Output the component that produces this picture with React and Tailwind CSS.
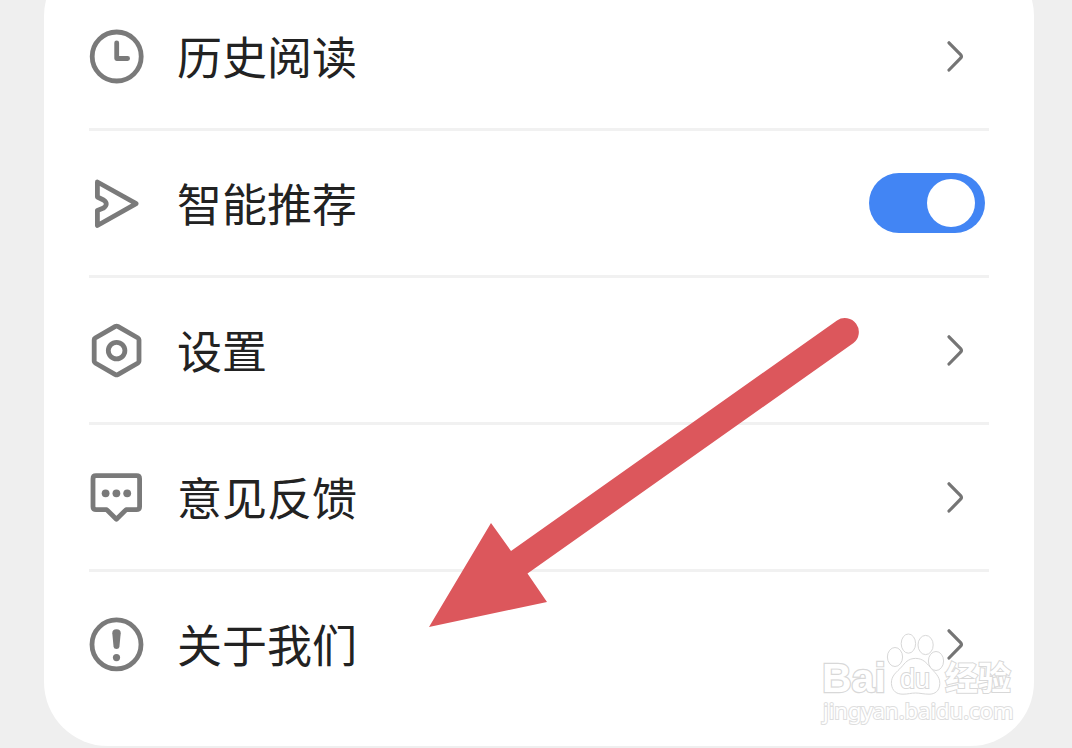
import React, { useState } from "react";

function HistoryIcon() {
  return (
    <svg className="w-14 h-14 shrink-0" viewBox="0 0 56 56" fill="none" stroke="#7a7a7a" strokeWidth="4.8" strokeLinecap="round" strokeLinejoin="round">
      <circle cx="27.7" cy="28.5" r="24.5" />
      <path d="M27.7 14.8V30.5H38.6" />
    </svg>
  );
}

function RecommendIcon() {
  return (
    <svg className="w-14 h-14 shrink-0" viewBox="0 0 56 56" fill="none" stroke="#7a7a7a" strokeWidth="4.8" strokeLinecap="round" strokeLinejoin="round">
      <path d="M8.4 7L47.2 28.6L8.4 50.5V35.5L14.5 33Q20 28.8 14.5 25L8.4 22Z" />
    </svg>
  );
}

function SettingsIcon() {
  return (
    <svg className="w-14 h-14 shrink-0" viewBox="0 0 56 56" fill="none" stroke="#7a7a7a" strokeWidth="4.8" strokeLinejoin="round">
      <path d="M26.4 4.4Q27.6 3.8 28.8 4.4L49 16Q50 16.6 50 17.8V39.2Q50 40.4 49 41L28.8 52.6Q27.6 53.2 26.4 52.6L6.2 41Q5.2 40.4 5.2 39.2V17.8Q5.2 16.6 6.2 16Z" />
      <circle cx="27.6" cy="28.6" r="8.3" />
    </svg>
  );
}

function FeedbackIcon() {
  return (
    <svg className="w-14 h-14 shrink-0" viewBox="0 0 56 56" fill="none" stroke="#7a7a7a" strokeWidth="4.8" strokeLinejoin="round">
      <path d="M7 6.7H47.6Q50.6 6.7 50.6 9.7V37.6Q50.6 40.6 47.6 40.6H37.2L27.4 50.2L17.6 40.6H7Q4 40.6 4 37.6V9.7Q4 6.7 7 6.7Z" />
      <g fill="#7a7a7a" stroke="none">
        <circle cx="16.6" cy="24.3" r="3.9" />
        <circle cx="27.4" cy="24.3" r="3.9" />
        <circle cx="38.2" cy="24.3" r="3.9" />
      </g>
    </svg>
  );
}

function AboutIcon() {
  return (
    <svg className="w-14 h-14 shrink-0" viewBox="0 0 56 56" fill="none" stroke="#7a7a7a" strokeWidth="4.8">
      <circle cx="27.5" cy="28.4" r="24.5" />
      <path d="M27.5 13.2Q31.8 13.4 31.7 17.2L30.4 31Q30 33 27.5 33Q25 33 24.6 31L23.3 17.2Q23.2 13.4 27.5 13.2Z" fill="#7a7a7a" stroke="none" />
      <circle cx="27.5" cy="41.6" r="3.6" fill="#7a7a7a" stroke="none" />
    </svg>
  );
}

function Chevron() {
  return (
    <svg className="w-5 h-8 mr-6 shrink-0" viewBox="0 0 20 32" fill="none" stroke="#757575" strokeWidth="3.2" strokeLinecap="round" strokeLinejoin="round">
      <path d="M4 2.8L15.6 14.6Q17.2 16.4 15.6 18.2L4 30" />
    </svg>
  );
}

function Arrow() {
  return (
    <svg className="absolute left-[429px] top-[317px] w-[431px] h-[311px] pointer-events-none" viewBox="429 317 431 311" fill="#dc575c" aria-hidden="true">
      <path d="M429 627L491 523L511 551L837 320.4A14 14 0 0 1 853.5 343L527.5 573.5L547 602Z" />
    </svg>
  );
}

function Watermark() {
  return (
    <svg className="absolute left-[816px] top-[628px] w-[204px] h-[104px] pointer-events-none" viewBox="816 628 204 104" fill="#fff" stroke="#d8d8d8" strokeWidth="1">
      <text x="822" y="692" strokeWidth="2.4" paintOrder="stroke" className="font-['Liberation_Sans',sans-serif] font-bold text-[41px]">Bai</text>
      <ellipse cx="895" cy="657" rx="7.6" ry="9.5" />
      <ellipse cx="908.4" cy="643.6" rx="7.2" ry="9.6" />
      <ellipse cx="925.6" cy="645" rx="7.6" ry="9.6" />
      <ellipse cx="936" cy="661" rx="7.6" ry="9.5" />
      <path d="M915.6 658.4C908 658.4 905 663 901.5 667C897 672 891 675.5 891.4 683.5C892 691.5 897 694.2 903 694.2C908 694.2 911 693 915.6 693C920 693 924 694.2 929 694.2C935 694.2 939.6 691 939.8 683.5C940 676 934 672 930 667C926.5 663 923 658.4 915.6 658.4Z" />
      <text x="900" y="688" strokeWidth="2" paintOrder="stroke" className="font-['Liberation_Sans',sans-serif] text-[27px]">du</text>
      <text x="945" y="690" strokeWidth="2" paintOrder="stroke" className="font-['Noto_Sans_CJK_SC',sans-serif] font-bold text-[33px]">经验</text>
      <text x="823" y="719" strokeWidth="2" paintOrder="stroke" stroke="#dedede" className="font-['Noto_Sans',sans-serif] text-[22px]">jingyan.baidu.com</text>
    </svg>
  );
}

const items = [
  { id: "history", label: "历史阅读", Icon: HistoryIcon },
  { id: "recommend", label: "智能推荐", Icon: RecommendIcon, toggle: true },
  { id: "settings", label: "设置", Icon: SettingsIcon },
  { id: "feedback", label: "意见反馈", Icon: FeedbackIcon },
  { id: "about", label: "关于我们", Icon: AboutIcon },
];

function App() {
  const [recommend, setRecommend] = useState(true);

  return (
    <div className="relative min-h-screen overflow-hidden bg-[#efefef] pl-11 pr-[38px] font-['Noto_Sans_CJK_SC',sans-serif] text-[#222]">
      <ul className="-mt-12 rounded-[64px] bg-white px-[45px] pt-8 pb-[30px] divide-y-3 divide-[#f1f1f1]">
        {items.map(({ id, label, Icon, toggle }) => (
          <li key={id}>
            {toggle ? (
              <label className="flex h-36 items-center gap-8 pr-1 text-[45px] leading-none cursor-pointer">
                <Icon />
                <span className="flex-1 pb-0.5">{label}</span>
                <input
                  type="checkbox"
                  role="switch"
                  checked={recommend}
                  onChange={(e) => setRecommend(e.target.checked)}
                  className="flex h-15 w-29 shrink-0 appearance-none items-center rounded-full bg-gray-300 px-2.5 cursor-pointer checked:justify-end checked:bg-[#4285f4] before:size-12 before:rounded-full before:bg-white"
                />
              </label>
            ) : (
              <a href={`#${id}`} className="flex h-36 items-center gap-8 text-[45px] leading-none">
                <Icon />
                <span className="flex-1 pb-0.5">{label}</span>
                <Chevron />
              </a>
            )}
          </li>
        ))}
      </ul>
      <Arrow />
      <Watermark />
    </div>
  );
}

export default App;
